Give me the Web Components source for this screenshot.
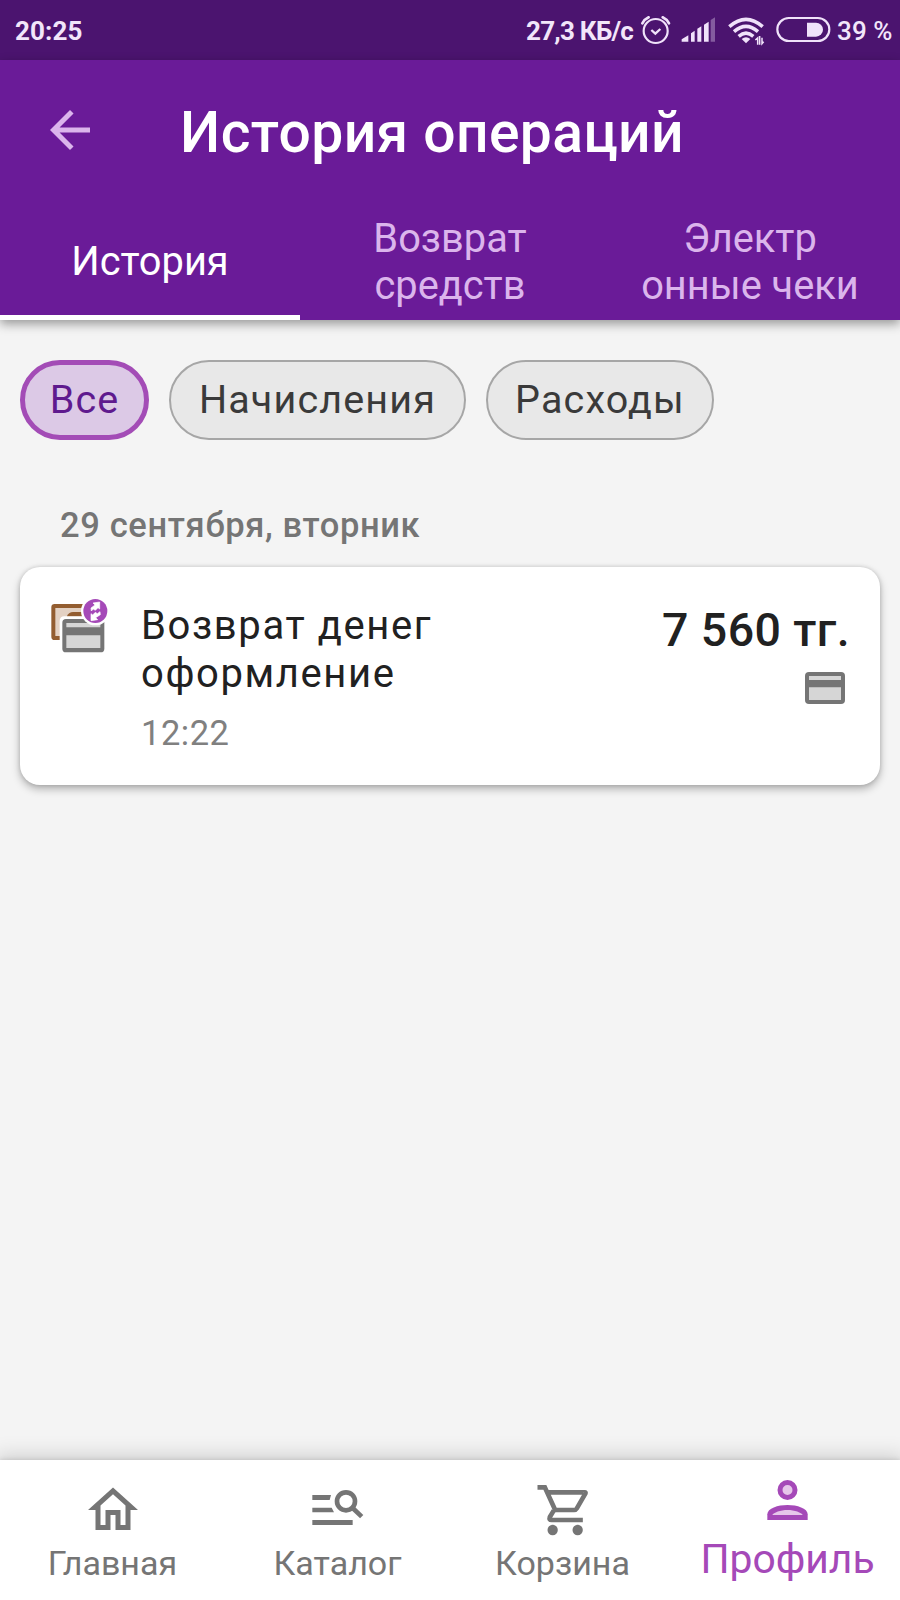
<!DOCTYPE html>
<html lang="ru">
<head>
<meta charset="utf-8">
<title>История операций</title>
<style>
html,body{margin:0;padding:0}
body{width:900px;height:1600px;overflow:hidden;background:#f4f4f4;font-family:Roboto,"Noto Sans",sans-serif}
</style>
</head>
<body>
<history-app></history-app>
<script>
const define = (name, html) => customElements.define(name, class extends HTMLElement {
  constructor() {
    super();
    const t = document.createElement('template');
    t.innerHTML = html;
    this.attachShadow({mode: 'open'}).append(t.content.cloneNode(true));
  }
});

define('status-bar', `<style>
:host{display:flex;box-sizing:border-box;height:60px;padding:0 8px 0 15px;background:#4b146f;color:#f2e6fa;font-size:26px;line-height:62px;font-weight:500;white-space:nowrap}
svg{display:block;height:60px;flex:none}
.time{flex:1;font-weight:700;letter-spacing:.1px}
.speed{width:107px;font-weight:700;letter-spacing:-.75px}
svg{position:relative;left:1px}
.pct{width:55px;letter-spacing:.1px}
</style>
<span class="time">20:25</span>
<span class="speed">27,3 КБ/с</span>
<svg width="204" viewBox="402 0 612 180" fill="none" stroke="#f0e2fa">
<circle cx="467" cy="93" r="36" stroke-width="6.500"/>
<path d="M454 90l12 11 15-14" stroke-width="7"/>
<path d="M427 70Q433 58 446 52M488 52Q501 58 507 70" stroke-width="8" stroke-linecap="round"/>
<g fill="#f0e2fa" stroke="none"><path d="M545 125v-7l20-12v19zM573 125v-25l11-8v33zM592 125V86l12-7v46zM612 125V74l14-9v60z"/><path d="M632 125V60l13-8v73z" opacity=".35"/>
<path d="M738 130l-13-13q13-11 26 0z"/>
<path d="M921 68h27a21 21 0 0 1 0 42h-27z"/></g>
<path d="M688 80Q738 36 788 80M702 95Q738 63 774 95M716 109Q738 90 760 109" stroke-width="10.500"/>
<path d="M766 120l7-6v20M779 134V108M786 113v18l5-6" stroke-width="4.500"/>
<rect x="832" y="54" width="156" height="69" rx="34.500" stroke-width="6.500"/>
</svg>
<span class="pct">39 %</span>`);

define('app-header', `<style>
:host{display:flex;flex-direction:column;position:relative;height:260px;background:#6a1b98;box-shadow:0 4px 10px rgba(0,0,0,.38)}
.bar{display:flex;height:142px;align-items:center;padding-left:40px}
svg{width:60px;height:60px;margin-right:80px;margin-bottom:2px}
h1{margin:3px 0 0;font-size:57px;line-height:70px;font-weight:500;letter-spacing:.4px;color:#fff;white-space:nowrap}
nav{display:grid;grid-template-columns:repeat(3,1fr);height:118px}
</style>
<div class="bar"><svg viewBox="0 0 24 24"><path fill="#dbb5ec" d="M20 11H7.83l5.59-5.59L12 4l-8 8 8 8 1.41-1.41L7.83 13H20v-2z"/></svg><h1><slot name="title"></slot></h1></div>
<nav><slot></slot></nav>`);

define('app-tab', `<style>
:host{display:flex;box-sizing:border-box;height:118px;align-items:center;justify-content:center;text-align:center;color:#dbb5ec;font-size:39.8px;line-height:47.5px;padding-top:2px;border-bottom:0 solid #fff}
:host([selected]){color:#fff;border-bottom-width:5px;padding-top:7px}
</style><span><slot></slot></span>`);

define('filter-chip', `<style>
:host{display:flex;box-sizing:border-box;height:80px;border:2.5px solid #a6a6a6;border-radius:40px;background:#e8e8e8;color:#3a3a3a;align-items:center;justify-content:center;font-size:39.5px;line-height:46px;letter-spacing:1.15px;white-space:nowrap}
:host([selected]){border:5px solid #a34cb6;background:#dcc9e6;color:#5f1a8e}
</style><span><slot></slot></span>`);

define('card-glyph', `<style>:host{display:block;width:40px;height:32px}svg{display:block}</style>
<svg width="40" height="32" viewBox="0 0 120 96"><rect width="120" height="96" rx="12" fill="#757575"/><path d="M12 12h96v12H12zM12 46h96v38H12z" fill="#d6d6d6"/></svg>`);

define('refund-glyph', `<style>:host{display:block;width:60px;height:60px;margin-top:-4px}svg{display:block}</style>
<svg width="60" height="60" viewBox="151 105 180 180">
<rect x="161" y="138" width="120" height="96" rx="4" fill="#e3d1c3" stroke="#935d30" stroke-width="12"/>
<path d="M202 168q6-12 18-12h40v14h-58z" fill="#935d30"/>
<path d="M180 290V183q0-14 14-14h114q14 0 14 14v107z" fill="#fff"/>
<rect x="188" y="177" width="126" height="100" rx="11" fill="#757575"/>
<path d="M200 189h102v13H200zM200 226h102v38H200z" fill="#d6d6d6"/>
<circle cx="287" cy="153" r="43" fill="#fff"/><circle cx="287" cy="153" r="36" fill="#a549b8"/>
<g fill="#fff" stroke="#fff" stroke-width="2" stroke-linejoin="round"><path d="M280 129l20-3v21l-5-4-8 8-6-4-6 6-1-9 12-9z"/><path d="M294 179l-20 3v-21l5 4 8-8 6 4 8-6 1 9-14 9z"/></g>
</svg>`);

define('operation-card', `<style>
:host{display:flex;box-sizing:border-box;height:218px;margin:0 20px;padding:32px 30px 0 30px;background:#fff;border-radius:20px;box-shadow:0 4px 8px rgba(0,0,0,.28),0 0 4px rgba(0,0,0,.14)}
.main{flex:1;margin-left:31px;padding-top:3px}
.name{font-size:40px;line-height:47.6px;letter-spacing:1.6px;color:#212121;white-space:pre-line}
.time{font-size:34.5px;line-height:41px;margin-top:16px;color:#808080;letter-spacing:.5px}
.side{display:flex;flex-direction:column;align-items:flex-end}
.sum{margin-top:1px;font-size:46.5px;line-height:60px;font-weight:500;color:#212121;letter-spacing:.4px;white-space:nowrap}
card-glyph{margin:11.5px 5px 0 0}
</style>
<refund-glyph></refund-glyph>
<div class="main"><div class="name"><slot name="name"></slot></div><div class="time"><slot name="time"></slot></div></div>
<div class="side"><div class="sum"><slot name="sum"></slot></div><card-glyph></card-glyph></div>`);

define('nav-item', `<style>
:host{display:flex;flex-direction:column;align-items:center;padding-top:20px;color:#757575;font-size:34px;line-height:42px}
:host([selected]){padding-top:10px;color:#a549b8;font-size:40.8px;line-height:48px}
.label{margin-top:2px;white-space:nowrap}
:host([selected]) .label{margin-top:5px}
::slotted(svg){display:block;width:60px;height:60px}
</style><slot name="icon"></slot><span class="label"><slot></slot></span>`);

define('bottom-nav', `<style>
:host{display:grid;grid-template-columns:repeat(4,1fr);height:140px;background:#fff;box-shadow:0 0 20px 4px rgba(0,0,0,.16),0 -1px 4px rgba(0,0,0,.1)}
</style><slot></slot>`);

define('history-app', `<style>
:host{display:flex;flex-direction:column;width:900px;height:1600px;background:#f4f4f4}
main{flex:1;padding-top:40px}
.chips{display:flex;gap:20px;padding-left:20px}
h2{margin:62px 0 19px 60px;font-size:34.5px;line-height:46px;font-weight:500;letter-spacing:.64px;color:#757575}
</style>
<status-bar></status-bar>
<app-header><span slot="title">История операций</span>
<app-tab selected>История</app-tab><app-tab>Возврат<br>средств</app-tab><app-tab>Электр<br>онные чеки</app-tab></app-header>
<main>
<div class="chips"><filter-chip selected style="width:129px">Все</filter-chip><filter-chip style="width:297px">Начисления</filter-chip><filter-chip style="width:228px">Расходы</filter-chip></div>
<h2>29 сентября, вторник</h2>
<operation-card><span slot="name">Возврат денег<br>оформление</span><span slot="time">12:22</span><span slot="sum">7 560 тг.</span></operation-card>
</main>
<bottom-nav>
<nav-item><svg slot="icon" viewBox="0 0 24 24"><path fill="#757575" d="M12 5.69l5 4.5V18h-2v-6H9v6H7v-7.81l5-4.500M12 3L2 12h3v8h6v-6h2v6h6v-8h3L12 3z"/></svg>Главная</nav-item>
<nav-item><svg slot="icon" viewBox="924 120 180 180" fill="none" stroke="#757575"><path fill="#757575" stroke="none" d="M937 165h56l-4 15h-52zM937 203h58l7 14h-65zM937 240h121v15H937z"/><circle cx="1038" cy="184" r="27" stroke-width="14"/><path d="M1058 204l27 26" stroke-width="14"/></svg>Каталог</nav-item>
<nav-item><svg slot="icon" viewBox="248.500 120 180 180" fill="none" stroke="#757575" stroke-width="14"><path d="M262 142h22l31 68h57q5 0 8-5l26-45q1-3-2-3H291"/><path d="M311 211l-12 20q-3 9 5 9h94"/><g fill="#757575" stroke="none"><circle cx="307.500" cy="270" r="15.500"/><circle cx="382.500" cy="270" r="15.500"/></g></svg>Корзина</nav-item>
<nav-item selected><svg slot="icon" viewBox="924 90 180 180"><circle cx="1012.500" cy="150" r="22.500" fill="#e6c6ea" stroke="#a549b8" stroke-width="15"/><path fill="#a549b8" d="M952 240v-17c0-18 32-28 60.500-28s60.500 10 60.500 28v17z"/><path fill="#e6c6ea" d="M967 225c3-7 25-15 45.500-15s42.500 8 45.500 15z"/></svg>Профиль</nav-item>
</bottom-nav>`);
</script>
</body>
</html>
